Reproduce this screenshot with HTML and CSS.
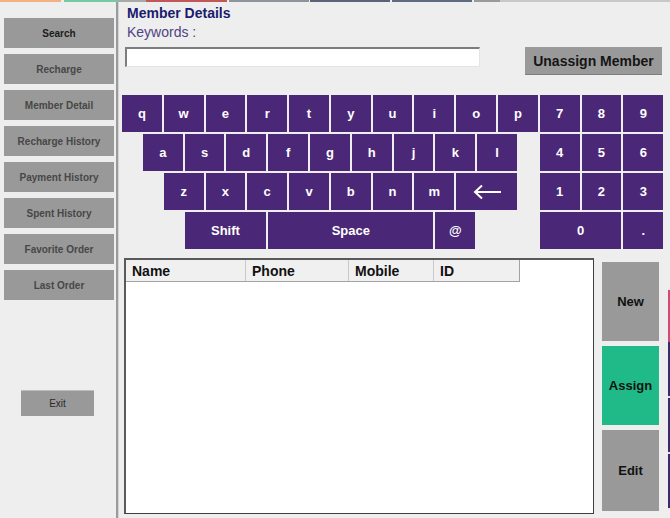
FILE: index.html
```html
<!DOCTYPE html>
<html>
<head>
<meta charset="utf-8">
<title>Member Details</title>
<link rel="stylesheet" href="styles.css">
</head>
<body>
<div class="tabs">
  <span class="tab t-orange"></span>
  <span class="tab t-green"></span>
  <span class="tab t-line"></span>
  <span class="tab t-red"></span>
  <span class="tab t-grey"></span>
  <span class="tab t-slate"></span>
  <span class="tab t-slate2"></span>
  <span class="tab t-grey2"></span>
  <span class="tab t-rest"></span>
</div>
<div class="app">
  <aside class="sidebar">
    <button class="side-btn active">Search</button>
    <button class="side-btn">Recharge</button>
    <button class="side-btn">Member Detail</button>
    <button class="side-btn">Recharge History</button>
    <button class="side-btn">Payment History</button>
    <button class="side-btn">Spent History</button>
    <button class="side-btn">Favorite Order</button>
    <button class="side-btn">Last Order</button>
    <button class="exit-btn">Exit</button>
  </aside>
  <main class="main">
    <h1 class="title">Member Details</h1>
    <div class="label">Keywords :</div>
    <div class="search-row">
      <input class="keywords" type="text">
      <button class="unassign">Unassign Member</button>
    </div>
    <div class="keyboard">
      <div class="key s2">q</div><div class="key s2">w</div><div class="key s2">e</div><div class="key s2">r</div><div class="key s2">t</div>
      <div class="key s2">y</div><div class="key s2">u</div><div class="key s2">i</div><div class="key s2">o</div><div class="key s2">p</div>
      <div class="key s2">7</div><div class="key s2">8</div><div class="key s2">9</div>

      <div class="key s2 from2">a</div><div class="key s2">s</div><div class="key s2">d</div><div class="key s2">f</div><div class="key s2">g</div>
      <div class="key s2">h</div><div class="key s2">j</div><div class="key s2">k</div><div class="key s2">l</div>
      <div class="key s2 pad">4</div><div class="key s2">5</div><div class="key s2">6</div>

      <div class="key s2 from3">z</div><div class="key s2">x</div><div class="key s2">c</div><div class="key s2">v</div><div class="key s2">b</div>
      <div class="key s2">n</div><div class="key s2">m</div>
      <div class="key s3 back"><svg width="30" height="16" viewBox="0 0 30 16"><path d="M29 8H3M10 1.5L3 8l7 6.5" fill="none" stroke="#fff" stroke-width="2"/></svg></div>
      <div class="key s2 pad">1</div><div class="key s2">2</div><div class="key s2">3</div>

      <div class="key s4 from4">Shift</div><div class="key s8">Space</div><div class="key s2">@</div>
      <div class="key s4 pad">0</div><div class="key s2">.</div>
    </div>
    <div class="bottom">
      <div class="table">
        <div class="thead">
          <div class="th c-name">Name</div>
          <div class="th c-phone">Phone</div>
          <div class="th c-mobile">Mobile</div>
          <div class="th c-id">ID</div>
        </div>
      </div>
      <div class="actions">
        <button class="act">New</button>
        <button class="act assign">Assign</button>
        <button class="act">Edit</button>
      </div>
      <div class="edge">
        <span class="edge-pink"></span>
        <span class="edge-purple"></span>
        <span class="edge-purple"></span>
        <span class="edge-purple"></span>
      </div>
    </div>
  </main>
</div>
</body>
</html>
```
FILE: styles.css
```css
* { box-sizing: border-box; }

html, body {
  margin: 0;
  padding: 0;
  width: 670px;
  height: 518px;
  overflow: hidden;
  background: #eeeeee;
  font-family: "Liberation Sans", Arial, sans-serif;
}

button {
  font-family: inherit;
  border: none;
  padding: 0;
  cursor: pointer;
}

/* strip of window tabs along the top edge */
.tabs {
  display: flex;
  height: 2px;
}
.tab { display: block; height: 2px; }
.t-orange { width: 61px; background: #f2b083; margin-right: 3px; }
.t-green { width: 54px; background: #78c9a6; }
.t-line { width: 28px; background: #a9a9a9; }
.t-red { width: 81px; background: #c0585a; margin-right: 2px; }
.t-grey { width: 80px; background: #8f949b; margin-right: 1px; }
.t-slate { width: 80px; background: #5b6477; margin-right: 2px; }
.t-slate2 { width: 80px; background: #5f6a80; margin-right: 2px; }
.t-grey2 { width: 26px; background: #9a9a9a; }
.t-rest { flex: 1; background: #c8c8c8; }

.app {
  display: flex;
  height: 516px;
  overflow: hidden;
}

/* left navigation */
.sidebar {
  width: 119px;
  flex: none;
  display: flex;
  flex-direction: column;
  padding: 16px 0 0 4px;
  border-right: 1px solid #d4d4d4;
  box-shadow: inset -2px 0 0 #9b9b9b;
}

.side-btn {
  width: 110px;
  height: 30px;
  margin-bottom: 6px;
  background: #999999;
  color: #474747;
  font-size: 10px;
  font-weight: bold;
}
.side-btn.active { color: #1c1c1c; }

.exit-btn {
  width: 73px;
  height: 26px;
  margin: 84px 0 0 17px;
  background: #999999;
  color: #2a2a2a;
  font-size: 10px;
  border-top: 1px solid #bdbdbd;
}

/* main panel */
.main {
  flex: 1;
  display: flex;
  flex-direction: column;
  padding-top: 3px;
}

.title {
  margin: 0 0 3px 8px;
  font-size: 14px;
  line-height: 16px;
  font-weight: bold;
  color: #1b1b6f;
}

.label {
  margin-left: 8px;
  font-size: 14px;
  line-height: 16px;
  color: #4f4482;
}

.search-row {
  display: flex;
  align-items: flex-start;
  margin-top: 7px;
  padding-left: 6px;
}

.keywords {
  width: 355px;
  height: 20px;
  margin: 0;
  background: #ffffff;
  border: none;
  border-top: 2px solid #7d7d7d;
  border-left: 2px solid #7d7d7d;
  border-right: 1px solid #e4e4e4;
  border-bottom: 1px solid #e4e4e4;
  outline: none;
}

.unassign {
  width: 137px;
  height: 28px;
  margin-left: 45px;
  background: #999999;
  color: #151515;
  font-size: 14px;
  font-weight: bold;
  border-bottom: 1px solid #7f7f7f;
}

/* on-screen keyboard: 26 half-key columns */
.keyboard {
  display: grid;
  grid-template-columns: repeat(26, 20.9px);
  grid-auto-rows: 37px;
  row-gap: 2px;
  margin: 20px 0 0 3px;
}

.key {
  margin-right: 2px;
  background: #4a2777;
  color: #ffffff;
  font-size: 13px;
  font-weight: bold;
  display: flex;
  align-items: center;
  justify-content: center;
}

.s2 { grid-column-end: span 2; }
.s3 { grid-column-end: span 3; }
.s4 { grid-column-end: span 4; }
.s8 { grid-column-end: span 8; }
.from2 { grid-column-start: 2; }
.from3 { grid-column-start: 3; }
.from4 { grid-column-start: 4; }
.pad { grid-column-start: 21; }
.back svg { display: block; }

/* member list and actions */
.bottom {
  display: flex;
  align-items: flex-start;
  margin-top: 9px;
  padding-left: 5px;
}

.table {
  width: 470px;
  height: 256px;
  background: #ffffff;
  border-top: 2px solid #5a5a5a;
  border-left: 2px solid #5a5a5a;
  border-right: 1px solid #3e3e3e;
  border-bottom: 1px solid #3e3e3e;
}

.thead {
  display: flex;
  width: 394px;
  height: 22px;
  background: #f0f0f0;
  border-bottom: 1px solid #a3a3a3;
  border-right: 1px solid #a3a3a3;
}

.th {
  height: 100%;
  padding: 3px 0 0 6px;
  font-size: 14px;
  font-weight: bold;
  color: #111111;
  border-right: 1px solid #c9c9c9;
}
.c-name { width: 120px; }
.c-phone { width: 103px; }
.c-mobile { width: 85px; }
.c-id { flex: 1; border-right: none; }

.actions {
  display: flex;
  flex-direction: column;
  margin: 4px 0 0 8px;
}

.act {
  width: 57px;
  height: 79px;
  margin-bottom: 5px;
  background: #999999;
  color: #111111;
  font-size: 13px;
  font-weight: bold;
}
.act:last-child { height: 81px; margin-bottom: 0; }
.act.assign { background: #1fba88; }

/* sliver of the neighbouring window at the right edge */
.edge {
  display: flex;
  flex-direction: column;
  width: 2px;
  margin: 32px 0 0 9px;
}
.edge span { display: block; width: 2px; }
.edge-pink { height: 52px; background: #d34a78; }
.edge-purple { height: 56px; background: #3c2a6c; border-bottom: 2px solid #e4e4e4; }
```
